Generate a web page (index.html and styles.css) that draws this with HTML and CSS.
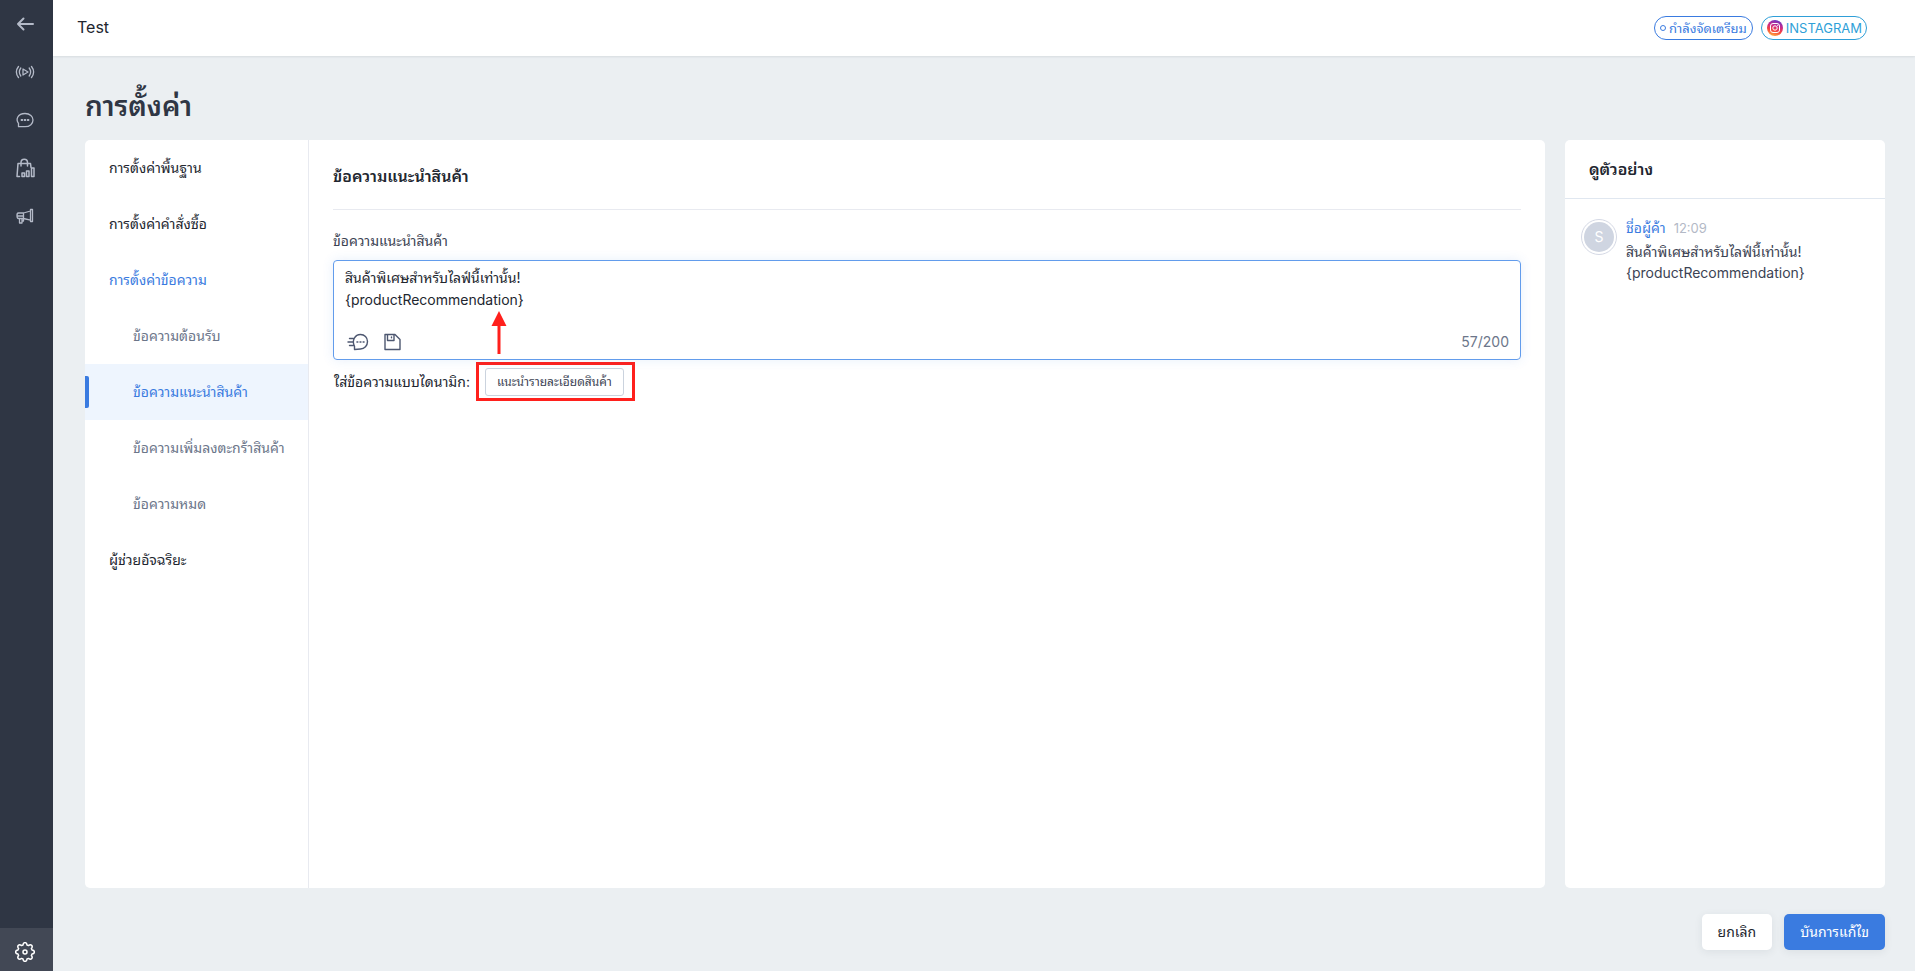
FILE: index.html
```html
<!DOCTYPE html>
<html lang="th">
<head>
<meta charset="utf-8">
<meta name="viewport" content="width=device-width, initial-scale=1">
<title>การตั้งค่า</title>
<link rel="stylesheet" href="styles.css">
</head>
<body>
<div class="app">
  <nav class="rail" aria-label="เมนูหลัก">
    <a class="rail-link" href="#back" aria-label="กลับ">
      <svg width="20" height="20" viewBox="0 0 20 20" stroke-width="2"><path d="M18 10H3M8.500 4.500 3 10l5.500 5.500"/></svg>
    </a>
    <a class="rail-link" href="#live" aria-label="ไลฟ์">
      <svg width="20" height="20" viewBox="0 0 20 20" stroke-width="1.300"><path d="M8 7v6l5-3zM5.800 6c-1.800 2.500-1.800 5.500 0 8M3.500 4.500c-2.700 3.500-2.700 7.500 0 11M14.200 6c1.800 2.500 1.800 5.500 0 8M16.500 4.500c2.700 3.500 2.700 7.500 0 11"/></svg>
    </a>
    <a class="rail-link" href="#messages" aria-label="ข้อความ">
      <svg width="20" height="20" viewBox="0 0 20 20" stroke-width="1.300"><path d="M3.500 16.700v-3.400C.500 9.500 2.500 3.500 10 3.500c5 0 8 3 8 6.500s-3 6.700-8 6.700z"/><path d="M6.500 10h.8M9.600 10h.8M12.700 10h.8" stroke-width="1.800"/></svg>
    </a>
    <a class="rail-link" href="#products" aria-label="สินค้า">
      <svg width="20" height="20" viewBox="0 0 20 20" stroke-width="1.500"><path d="M4.500 18.500H2L3 5.500h12.500l.5 4M6 8V4.500C6 0 12.500 0 12.500 4.500V8M7 15h2.500v3.500H7zM11.500 13H14v5.500h-2.500zM16.500 10H19v8.500h-2.500z"/></svg>
    </a>
    <a class="rail-link" href="#campaigns" aria-label="แคมเปญ">
      <svg width="20" height="20" viewBox="0 0 20 20" stroke-width="1.300"><path d="M15.500 3.500h2v12h-2zM15.500 5 8.500 7v5.500l7 1.700M8.500 7H3.500C2 7 2 8 2 9.700s0 2.800 1.500 2.800h5M2.500 10h6M4.500 12.500v4.500H7v-4.500M7 15h1.500v-2.500"/></svg>
    </a>
    <a class="rail-link rail-settings" href="#settings" aria-label="การตั้งค่า" aria-current="page">
      <svg width="20" height="20" viewBox="0 0 20 20" stroke-width="1.500"><path d="M8 3C8.300-.2 11.700-.2 12 3L13.500 3.600C16 1.600 18.400 4 16.400 6.500L17 8C20.200 8.300 20.200 11.700 17 12L16.400 13.500C18.400 16 16 18.400 13.500 16.400L12 17C11.700 20.200 8.300 20.200 8 17L6.500 16.400C4 18.400 1.600 16 3.600 13.500L3 12C-.2 11.700-.2 8.300 3 8L3.600 6.500C1.600 4 4 1.600 6.500 3.600z"/><circle cx="10" cy="10" r="2"/></svg>
    </a>
  </nav>

  <div class="page">
    <header class="topbar">
      <div class="topbar-title">Test</div>
      <div class="tags">
        <span class="tag tag-status"><span class="dot"></span>กำลังจัดเตรียม</span>
        <span class="tag tag-channel">
          <svg width="16" height="16" viewBox="0 0 16 16" aria-hidden="true">
            <defs><linearGradient id="ig" x1="0.300" y1="1" x2="0.600" y2="0"><stop offset="0" stop-color="#ffb13d"/><stop offset="0.350" stop-color="#f6443f"/><stop offset="0.650" stop-color="#c82a8c"/><stop offset="1" stop-color="#6a35c4"/></linearGradient></defs>
            <circle cx="8" cy="8" r="8" fill="url(#ig)"/>
            <rect x="3.500" y="3.500" width="9" height="9" rx="2.500" fill="none" stroke="#fff"/>
            <circle cx="8" cy="8" r="2.200" fill="none" stroke="#fff"/><circle cx="10.700" cy="5.300" r=".6" fill="#fff"/>
          </svg>INSTAGRAM</span>
      </div>
    </header>

    <main class="content">
      <h1 class="title">การตั้งค่า</h1>
      <div class="columns">
        <div class="card settings">
          <nav class="menu" aria-label="การตั้งค่า">
            <a class="menu-item" href="#basic">การตั้งค่าพื้นฐาน</a>
            <a class="menu-item" href="#order">การตั้งค่าคำสั่งซื้อ</a>
            <a class="menu-item menu-open" href="#message">การตั้งค่าข้อความ</a>
            <a class="menu-item menu-sub" href="#welcome">ข้อความต้อนรับ</a>
            <a class="menu-item menu-sub menu-active" href="#recommend" aria-current="page">ข้อความแนะนำสินค้า</a>
            <a class="menu-item menu-sub" href="#cart">ข้อความเพิ่มลงตะกร้าสินค้า</a>
            <a class="menu-item menu-sub" href="#soldout">ข้อความหมด</a>
            <a class="menu-item" href="#assistant">ผู้ช่วยอัจฉริยะ</a>
          </nav>
          <section class="editor">
            <h2 class="editor-title">ข้อความแนะนำสินค้า</h2>
            <label class="field-label" for="message">ข้อความแนะนำสินค้า</label>
            <div class="field">
              <textarea class="field-text" id="message" rows="2">สินค้าพิเศษสำหรับไลฟ์นี้เท่านั้น!
{productRecommendation}</textarea>
              <div class="field-tools">
                <button class="tool" type="button" aria-label="ข้อความด่วน">
                  <svg width="22" height="20" viewBox="0 0 22 20"><path d="M7.500 17.500v-3.200C4.500 8.500 8 2.500 13.500 2.500c4 0 7 3 7 7s-3 7.500-7 7.500zM2.500 6.500h4M1 10h4.500M2.500 13.500h4"/><path d="M10 10h.8M13.100 10h.8M16.200 10h.8" stroke-width="1.600"/></svg>
                </button>
                <button class="tool" type="button" aria-label="บันทึก">
                  <svg width="22" height="20" viewBox="0 0 22 20"><path d="M4 2.500h10L19 7.500v10H4zM6.500 2.500v6H13v-6M10.500 5v.8"/></svg>
                </button>
                <span class="counter">57/200</span>
              </div>
              <svg class="arrow" width="16" height="43" viewBox="0 0 16 43" aria-hidden="true"><path d="M8 0 15.500 15h-6v28h-3V15h-6z"/></svg>
            </div>
            <div class="dynamic">
              <span>ใส่ข้อความแบบไดนามิก:</span>
              <span class="highlight"><button class="chip" type="button">แนะนำรายละเอียดสินค้า</button></span>
            </div>
          </section>
        </div>

        <aside class="card preview">
          <h2 class="preview-title">ดูตัวอย่าง</h2>
          <div class="comment">
            <div class="avatar"><span class="avatar-fill">S</span></div>
            <div class="comment-body">
              <div class="comment-head"><span class="seller">ชื่อผู้ค้า</span><time class="time">12:09</time></div>
              <p class="comment-text">สินค้าพิเศษสำหรับไลฟ์นี้เท่านั้น!<br>{productRecommendation}</p>
            </div>
          </div>
        </aside>
      </div>
      <div class="actions">
        <button class="btn" type="button">ยกเลิก</button>
        <button class="btn btn-primary" type="button">บันการแก้ไข</button>
      </div>
    </main>
  </div>
</div>
</body>
</html>
```
FILE: styles.css
```css
*, *::before, *::after { box-sizing: border-box; }

body {
  margin: 0;
  font-family: Inter, "Noto Sans Thai Looped", "IBM Plex Sans Thai Looped", Sarabun, Loma, Garuda, Umpush, Waree, "Noto Sans Thai", "Noto Sans", sans-serif;
  font-size: 14px;
  line-height: 22px;
  color: #22262f;
}

button, textarea { font: inherit; color: inherit; }
a { color: inherit; text-decoration: none; }
h1, h2, p { margin: 0; }
svg { display: block; }

.app { display: flex; min-height: 100vh; background: #ebeff2; }

.rail {
  display: flex;
  flex-direction: column;
  flex: none;
  width: 53px;
  background: #2f3644;
}
.rail-link {
  display: flex;
  align-items: center;
  justify-content: center;
  height: 48px;
  padding-right: 3px;
  color: #b4bac8;
}
.rail-link svg { fill: none; stroke: currentColor; stroke-linecap: round; stroke-linejoin: round; }
.rail-settings { height: 43px; margin-top: auto; padding-top: 4px; background: #424855; color: #fff; }

.page { display: flex; flex-direction: column; flex: 1; min-width: 0; }

.topbar {
  display: flex;
  align-items: center;
  justify-content: space-between;
  height: 56px;
  padding: 0 48px 2px 24px;
  background: #fff;
  box-shadow: 0 1px 2px rgba(40, 50, 70, 0.1);
}
.topbar-title { font-size: 16px; }
.tags { display: flex; gap: 8px; padding-top: 2px; }
.tag {
  display: flex;
  align-items: center;
  height: 24px;
  padding: 0 5px;
  border: 1px solid;
  border-radius: 12px;
  font-size: 13px;
}
.tag-status { gap: 3px; color: #3a7be0; }
.tag-channel { gap: 3px; padding: 0 4px 0 5px; color: #2f9fd8; }
.dot { width: 6px; height: 6px; border: 1px solid; border-radius: 50%; }

.content { display: flex; flex-direction: column; flex: 1; padding: 28px 30px 21px 32px; }
.title { margin-bottom: 12px; font-size: 28px; line-height: 44px; font-weight: 600; color: #2f3644; }

.columns { display: flex; flex: 1; gap: 20px; }
.card { background: #fff; border-radius: 5px; }

.settings { display: flex; flex: 1; min-width: 0; overflow: hidden; }
.menu { flex: none; width: 224px; border-right: 1px solid #e8eaf0; }
.menu-item { display: flex; align-items: center; height: 56px; padding-left: 24px; white-space: nowrap; }
.menu-open { color: #3a7be0; }
.menu-sub { padding-left: 48px; color: #6c768a; }
.menu-active { position: relative; background: #eef5fe; color: #3a7be0; }
.menu-active::before {
  content: "";
  position: absolute;
  left: 0;
  top: 12px;
  width: 4px;
  height: 32px;
  border-radius: 0 2px 2px 0;
  background: #3a7be0;
}

.editor { flex: 1; min-width: 0; padding: 24px; }
.editor-title {
  padding-bottom: 21px;
  margin-bottom: 20px;
  border-bottom: 1px solid #e8eaf0;
  font-size: 16px;
  line-height: 24px;
  font-weight: 600;
}
.field-label { display: block; margin-bottom: 8px; color: #3c4353; }
.field {
  position: relative;
  height: 100px;
  padding: 6px 11px;
  border: 1px solid #629cec;
  border-radius: 4px;
  box-shadow: 0 0 12px rgba(58, 123, 224, 0.12);
}
.field-text {
  display: block;
  width: 100%;
  height: 64px;
  padding: 0;
  border: 0;
  outline: 0;
  resize: none;
  overflow: hidden;
  background: none;
}
.field-tools { display: flex; align-items: center; gap: 12px; padding-left: 2px; }
.tool { padding: 0; border: 0; background: none; color: #4d5770; }
.tool svg { fill: none; stroke: currentColor; stroke-width: 1.4; stroke-linecap: round; stroke-linejoin: round; }
.counter { margin-left: auto; color: #6c768a; }
.arrow { position: absolute; left: 157px; top: 50px; fill: #ff201c; }

.dynamic { display: flex; align-items: center; gap: 6px; margin-top: 2px; padding-left: 1px; }
.highlight { display: flex; padding: 3px 8px 2px 6px; border: 3px solid #ff201c; }
.chip {
  height: 28px;
  padding: 0 11px;
  border: 1px solid #cbd3de;
  border-radius: 3px;
  background: #fff;
  font-size: 12px;
  line-height: 20px;
  color: #3c4353;
}

.preview { flex: none; width: 320px; }
.preview-title {
  padding: 17px 24px;
  border-bottom: 1px solid #e0e7f0;
  font-size: 16px;
  line-height: 24px;
  font-weight: 600;
}
.comment { display: flex; gap: 9px; padding: 18px 16px; }
.avatar { display: flex; flex: none; width: 36px; height: 36px; margin-top: 2px; padding: 2px; border: 1px solid #d5d9e5; border-radius: 50%; }
.avatar-fill { display: flex; flex: 1; align-items: center; justify-content: center; border-radius: 50%; background: #cfd5e1; color: #fff; }
.comment-head { display: flex; gap: 8px; }
.seller { color: #3a7be0; }
.time { font-size: 13px; color: #b3b9c6; }
.comment-text { margin-top: 2px; line-height: 21px; color: #3c4353; }

.actions { display: flex; justify-content: flex-end; gap: 12px; margin-top: 26px; }
.btn {
  height: 36px;
  padding: 0 16px;
  border: 0;
  border-radius: 5px;
  background: #fff;
  box-shadow: 0 2px 8px rgba(40, 50, 70, 0.08);
}
.btn-primary { background: #3a7be0; color: #fff; }
```
